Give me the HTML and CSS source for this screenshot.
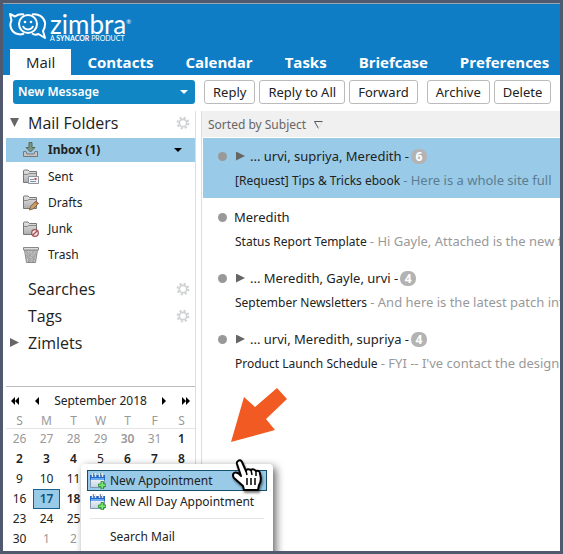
FILE: index.html
```html
<!DOCTYPE html>
<html lang="en">
<head>
    <meta charset="UTF-8">
    <title>Zimbra: Inbox (1)</title>
    <meta name="viewport" content="width=device-width, initial-scale=1">
    <link rel="stylesheet" href="styles.css">
</head>
<body>
<svg class="defs" width="0" height="0" aria-hidden="true">
    <defs>
        <linearGradient id="folderFill" x1="0" y1="0" x2="0" y2="1">
            <stop offset="0" stop-color="#e4e4e4"/>
            <stop offset="1" stop-color="#adadad"/>
        </linearGradient>
        <linearGradient id="calFill" x1="0" y1="0" x2="0" y2="1">
            <stop offset="0" stop-color="#ffffff"/>
            <stop offset="1" stop-color="#c4d3e2"/>
        </linearGradient>
    </defs>
    <symbol id="gear" viewBox="0 0 14 14">
        <circle cx="7" cy="7" r="5.4" fill="none" stroke="#cfd1d3" stroke-width="2" stroke-dasharray="2.1 2.14"/>
        <circle cx="7" cy="7" r="3.7" fill="none" stroke="#cfd1d3" stroke-width="1.7"/>
    </symbol>
    <symbol id="folder" viewBox="0 0 16 16">
        <path d="M.5 13.500V2Q.5 1 1.500 1H5L6.500 2.500H13.500V13.500Z" fill="url(#folderFill)" stroke="#777"/>
        <path d="M1 5.500H4.500L6 4.500H13.500" fill="none" stroke="#8a8a8a"/>
    </symbol>
    <symbol id="appt" viewBox="0 0 16 16">
        <path d="M.5 2.500H14.500V14.500H.5Z" fill="url(#calFill)" stroke="#7c96b4"/>
        <path d="M0 2H15V7H0Z" fill="#2467c8"/>
        <path d="M1 5H14V7H1Z" fill="#69a9ef"/>
        <path d="M2.500 0V4M5.500 0V4M9.500 0V4M12.500 0V4" stroke="#e2e5e8" stroke-width="1.500"/>
        <path d="M3.500 0V3M10.500 0V3" stroke="#68717d" stroke-width=".8"/>
        <path d="M11 8.500H13.500V11H16V13.500H13.500V16H11V13.500H8.500V11H11Z" fill="#7be56c" stroke="#188a20" stroke-width=".8"/>
    </symbol>
</svg>

<div class="app">
    <header class="banner">
        <a class="logo" href="#" aria-label="Zimbra">
            <svg class="logo-mark" viewBox="0 0 38 27" fill="none" stroke="#fff" stroke-width="2" stroke-linejoin="round">
                <circle cx="19" cy="11" r="9"/>
                <path d="M15 1.500Q10 .5 6 3.500L1 1L2.500 7.500C-.5 13 3 20 9 21Q12 22 15 20.500"/>
                <path d="M23 1.500C29 0 35 4 36 9.500Q36.500 14 34 18L36 25L29.500 21Q26 22.500 23 20.500"/>
                <path d="M14 13C15.500 17.500 22.500 17.500 24 13"/>
                <circle cx="16" cy="9" r="1.300" fill="#fff" stroke="none"/>
                <circle cx="22" cy="9" r="1.300" fill="#fff" stroke="none"/>
            </svg>
            <span class="logo-text">
                <span class="logo-name">zimbra<sup>®</sup></span>
                <span class="logo-sub">A <b>SYNACOR</b> PRODUCT</span>
            </span>
        </a>
        <nav class="tabs">
            <a class="tab active" href="#">Mail</a>
            <a class="tab" href="#">Contacts</a>
            <a class="tab" href="#">Calendar</a>
            <a class="tab" href="#">Tasks</a>
            <a class="tab" href="#">Briefcase</a>
            <a class="tab" href="#">Preferences</a>
        </nav>
    </header>

    <div class="toolbar">
        <button class="btn-new" type="button">New Message <i class="caret"></i></button>
        <div class="btn-group">
            <button class="btn" type="button">Reply</button>
            <button class="btn" type="button">Reply to All</button>
            <button class="btn" type="button">Forward</button>
        </div>
        <div class="btn-group">
            <button class="btn" type="button">Archive</button>
            <button class="btn" type="button">Delete</button>
        </div>
    </div>

    <div class="content">
        <aside class="sidebar">
            <div class="tree">
                <div class="tree-head"><i class="arrow down"></i><span>Mail Folders</span><svg class="gear"><use href="#gear"/></svg></div>
                <ul class="folders">
                    <li><a class="folder selected" href="#">
                        <svg viewBox="0 0 16 16"><path d="M.5 9.500H3L4 12H11L12 9.500H14.500V14.500H.5Z" fill="#c4c4c4" stroke="#767676"/><path d="M6 .5H9V5.500H12L7.500 10L3 5.500H6Z" fill="#7e9683" stroke="#526b59"/></svg>
                        <span>Inbox (1)</span><i class="caret"></i></a></li>
                    <li><a class="folder" href="#">
                        <svg viewBox="0 0 16 16"><use href="#folder"/><path d="M5.500 7.500H15.500V14.500H5.500Z" fill="#f5f5f5" stroke="#8d949c"/><path d="M12.500 9V11" stroke="#b94a4a" stroke-width="2"/><path d="M7 10.500H11M7 12.500H13" stroke="#7e96ad"/></svg>
                        <span>Sent</span></a></li>
                    <li><a class="folder" href="#">
                        <svg viewBox="0 0 16 16"><use href="#folder"/><path d="M6.500 15L7.500 11.500L13 6L15.500 8.500L10 14Z" fill="#c9a263" stroke="#6b5431" stroke-width=".8"/><path d="M12.500 6.500L15 9" stroke="#bd6552" stroke-width="2"/></svg>
                        <span>Drafts</span></a></li>
                    <li><a class="folder" href="#">
                        <svg viewBox="0 0 16 16"><use href="#folder"/><circle cx="12" cy="12" r="3.300" fill="#eee" stroke="#a84f55" stroke-width="1.300"/><path d="M9.700 14.300L14.300 9.700" stroke="#a84f55" stroke-width="1.300"/></svg>
                        <span>Junk</span></a></li>
                    <li><a class="folder" href="#">
                        <svg viewBox="0 0 16 16"><path d="M1.500 3H14.500L12.500 15.500H3.500Z" fill="#c2c2c2" stroke="#8a8a8a"/><path d="M4 5L6 15M7 4V15M10 4V15M13 5L10 15M2 7L10 15M3 4L12 13M13 7L5 15M12 4L3 11" stroke="#989898" stroke-width=".7"/><path d="M.5 .5H15.500V3H.5Z" fill="#ddd" stroke="#888"/></svg>
                        <span>Trash</span></a></li>
                </ul>
                <div class="tree-head"><i class="arrow"></i><span>Searches</span><svg class="gear"><use href="#gear"/></svg></div>
                <div class="tree-head"><i class="arrow"></i><span>Tags</span><svg class="gear"><use href="#gear"/></svg></div>
                <div class="tree-head"><i class="arrow right"></i><span>Zimlets</span></div>
            </div>

            <div class="minical">
                <div class="cal-nav">
                    <button type="button" aria-label="Previous year"><svg viewBox="0 0 9 8"><path d="M4 0V8L0 4ZM8 0V8L4 4Z"/></svg></button>
                    <button type="button" aria-label="Previous month"><svg viewBox="0 0 9 8"><path d="M6 0V8L2 4Z"/></svg></button>
                    <span class="cal-title">September 2018</span>
                    <button type="button" aria-label="Next month"><svg viewBox="0 0 9 8"><path d="M3 0V8L7 4Z"/></svg></button>
                    <button type="button" aria-label="Next year"><svg viewBox="0 0 9 8"><path d="M1 0V8L5 4ZM5 0V8L9 4Z"/></svg></button>
                </div>
                <table>
                    <thead>
                    <tr><th>S</th><th>M</th><th>T</th><th>W</th><th>T</th><th>F</th><th>S</th></tr>
                    </thead>
                    <tbody>
                    <tr><td class="off">26</td><td class="off">27</td><td class="off">28</td><td class="off">29</td><td class="off busy">30</td><td class="off">31</td><td class="busy">1</td></tr>
                    <tr><td class="busy">2</td><td class="busy">3</td><td class="busy">4</td><td>5</td><td class="busy">6</td><td class="busy">7</td><td class="busy">8</td></tr>
                    <tr><td>9</td><td>10</td><td>11</td><td>12</td><td>13</td><td>14</td><td>15</td></tr>
                    <tr><td>16</td><td class="today">17</td><td class="busy">18</td><td>19</td><td>20</td><td>21</td><td>22</td></tr>
                    <tr><td>23</td><td>24</td><td>25</td><td>26</td><td>27</td><td>28</td><td>29</td></tr>
                    <tr><td>30</td><td class="off">1</td><td class="off">2</td><td class="off">3</td><td class="off">4</td><td class="off">5</td><td class="off">6</td></tr>
                    </tbody>
                </table>

                <div class="menu">
                    <button class="menu-item hover" type="button"><svg><use href="#appt"/></svg>New Appointment</button>
                    <button class="menu-item" type="button"><svg><use href="#appt"/></svg>New All Day Appointment</button>
                    <hr>
                    <button class="menu-item" type="button"><svg></svg>Search Mail</button>
                </div>
                <svg class="pointer-arrow" viewBox="0 0 58 56"><path d="M1 55L14 10L25 20L47 1L57 12L36 32L45 43Z" fill="#f15a22"/></svg>
                <svg class="cursor" viewBox="0 0 32 34">
                    <path d="M7 2Q9.500 0 11 3L15 12Q16 9 20 11Q22 9 25 12Q29 11 29 15Q31 22 28 26L27 31H13L12 27L3 19Q1 16 3 14Q6 12 10 17L6 5Q5.500 3 7 2Z" fill="#fff" stroke="#000" stroke-width="2" stroke-linejoin="round"/>
                    <path d="M15 12L16 16M20 11L21 16M25 12V17" stroke="#000" stroke-width="1.500"/>
                    <path d="M16 19V26M20 19V26M24 19V26" stroke="#000" stroke-width="1.500"/>
                </svg>
            </div>
        </aside>

        <main class="mail">
            <div class="sort">Sorted by Subject <svg viewBox="0 0 9 8"><path d="M8.500 .5H.5L4.500 7.500" fill="none" stroke="#555"/><path d="M4.500 7.500L8 1" stroke="#ddd"/></svg></div>
            <ul class="messages">
                <li class="message selected">
                    <div class="from"><i class="dot"></i><i class="expand"></i><span>... urvi, supriya, Meredith -</span><b class="count">6</b></div>
                    <div class="subject">[Request] Tips &amp; Tricks ebook <span>- Here is a whole site full</span></div>
                </li>
                <li class="message">
                    <div class="from"><i class="dot"></i><span>Meredith</span></div>
                    <div class="subject">Status Report Template <span>- Hi Gayle, Attached is the new f</span></div>
                </li>
                <li class="message">
                    <div class="from"><i class="dot"></i><i class="expand"></i><span>... Meredith, Gayle, urvi -</span><b class="count">4</b></div>
                    <div class="subject">September Newsletters <span>- And here is the latest patch inf</span></div>
                </li>
                <li class="message">
                    <div class="from"><i class="dot"></i><i class="expand"></i><span>... urvi, Meredith, supriya -</span><b class="count">4</b></div>
                    <div class="subject">Product Launch Schedule <span>- FYI -- I've contact the design</span></div>
                </li>
            </ul>
        </main>
    </div>
</div>
</body>
</html>
```
FILE: styles.css
```css
/*reset*/
body,ul,li,button,td,th{
    padding: 0;
    margin: 0;
}
ul{
    list-style: none;
}
a{
    color: inherit;
    text-decoration: none;
}
button{
    font: inherit;
    color: inherit;
    border: 0;
    background: none;
}
body{
    font-family: "Noto Sans","Open Sans",sans-serif;
    font-size: 12px;
    line-height: 20px;
    color: #222;
}
.defs{
    position: absolute;
}

/*frame*/
.app{
    display: flex;
    flex-direction: column;
    height: 100vh;
    box-sizing: border-box;
    border: 3px solid #51596e;
    overflow: hidden;
    background: #fff;
}

/*banner*/
.banner{
    display: flex;
    flex-direction: column;
    justify-content: space-between;
    flex: none;
    height: 72px;
    box-sizing: border-box;
    padding: 9px 7px 0 6px;
    border-top: 1px solid #9aa5b1;
    background: #0f7dc5;
    color: #fff;
}
.logo{
    display: flex;
    gap: 3px;
}
.logo-mark{
    width: 38px;
    height: 27px;
}
.logo-text{
    display: flex;
    flex-direction: column;
}
.logo-name{
    font-family: Lato,sans-serif;
    font-size: 26px;
    line-height: 22px;
    height: 22px;
}
.logo-name sup{
    font-size: 6px;
    line-height: 6px;
    vertical-align: 10px;
}
.logo-sub{
    font-family: Lato,sans-serif;
    font-size: 7px;
    line-height: 6px;
}
.tabs{
    display: flex;
    padding-left: 1px;
}
.tab{
    padding: 0 16px;
    font-family: "Open Sans",sans-serif;
    font-size: 15px;
    font-weight: bold;
    line-height: 26px;
}
.tab.active{
    background: #fff;
    color: #222;
    font-weight: normal;
}

/*toolbar*/
.toolbar{
    display: flex;
    flex: none;
    gap: 9px;
    padding: 5px 4px 7px 10px;
}
.btn-new{
    display: flex;
    justify-content: space-between;
    align-items: center;
    width: 182px;
    height: 24px;
    padding: 0 7px 0 5px;
    border-radius: 3px;
    background: #1086c5;
    color: #fff;
    font-weight: 600;
}
.caret{
    border: 4px solid transparent;
    border-top-color: currentColor;
    border-bottom: 0;
}
.btn-group{
    display: flex;
    gap: 4px;
}
.btn{
    height: 24px;
    padding: 0 8px;
    border: 1px solid #bbb;
    border-radius: 3px;
    background: #fff;
    font-size: 13px;
    white-space: nowrap;
}

/*sidebar*/
.content{
    display: flex;
    flex: 1;
    min-height: 0;
    padding-left: 3px;
}
.sidebar{
    display: flex;
    flex-direction: column;
    flex: none;
    width: 189px;
    border-right: 1px solid #ddd;
}
.tree{
    flex: 1;
}
.tree-head{
    display: flex;
    align-items: center;
    height: 23px;
    margin-bottom: 4px;
    padding: 0 5px 0 4px;
    font-family: "Open Sans",sans-serif;
    font-size: 16px;
}
.tree-head span{
    flex: 1;
}
.tree-head .gear{
    width: 14px;
    height: 14px;
}
.arrow{
    width: 18px;
    height: 9px;
    flex: none;
}
.arrow::before{
    content: "";
    display: block;
    width: 9px;
    height: 9px;
}
.arrow.down::before{
    background: #666;
    clip-path: polygon(0 0,100% 0,50% 100%);
}
.arrow.right::before{
    background: #666;
    clip-path: polygon(0 0,100% 50%,0 100%);
}
.folders{
    padding-bottom: 9px;
}
.folder{
    display: flex;
    align-items: center;
    gap: 9px;
    height: 26px;
    padding: 0 13px 0 17px;
}
.folder svg{
    width: 16px;
    height: 16px;
}
.folder span{
    flex: 1;
}
.folder.selected{
    height: 24px;
    margin-bottom: 2px;
    background: #99cae7;
    font-weight: bold;
}
.folder .caret{
    color: #000;
}

/*mini calendar*/
.minical{
    position: relative;
    flex: none;
    padding-bottom: 2px;
    border-top: 1px solid #bbb;
}
.cal-nav{
    display: flex;
    justify-content: space-between;
    align-items: center;
    height: 26px;
    padding: 2px 5px 0;
    box-sizing: border-box;
}
.cal-nav button{
    display: flex;
}
.cal-nav svg{
    width: 9px;
    height: 8px;
}
.minical table{
    width: 100%;
    table-layout: fixed;
    border-collapse: separate;
    border-spacing: 0;
}
.minical th{
    height: 15px;
    line-height: 15px;
    border-bottom: 1px solid #e4e4e4;
    color: #999;
    font-weight: normal;
}
.minical td{
    height: 20px;
    line-height: 18px;
    text-align: center;
}
.minical .busy{
    font-weight: 600;
}
.minical .off{
    color: #999;
}
.minical .today{
    background: #99cae7;
    box-shadow: inset 0 0 0 1px #15628f;
    color: #0b5580;
    font-weight: 600;
}

/*context menu*/
.menu{
    position: absolute;
    top: 77px;
    left: 75px;
    width: 192px;
    height: 100px;
    box-sizing: border-box;
    padding: 6px;
    border-radius: 4px;
    background: #fff;
    box-shadow: 3px 3px 8px rgba(0,0,0,.6);
}
.menu-item{
    display: flex;
    align-items: center;
    gap: 4px;
    width: 100%;
    height: 21px;
    padding: 0 2px;
    border: 1px solid transparent;
    white-space: nowrap;
}
.menu-item svg{
    width: 16px;
    height: 16px;
    flex: none;
}
.menu-item.hover{
    background: #99cae7;
    border-color: #174f6d;
}
.menu hr{
    margin: 6px 3px 7px;
    border: 0;
    border-top: 1px solid #e4e4e4;
}
.pointer-arrow{
    position: absolute;
    top: 0;
    left: 224px;
    width: 58px;
    height: 56px;
}
.cursor{
    position: absolute;
    top: 72px;
    left: 225px;
    width: 32px;
    height: 34px;
    filter: drop-shadow(1px 2px 1px rgba(0,0,0,.5));
}

/*message list*/
.mail{
    flex: 1;
    min-width: 0;
    margin-left: 5px;
    border-left: 1px solid #ddd;
}
.sort{
    height: 26px;
    padding-left: 6px;
    background: #f0f0f0;
    color: #666;
    line-height: 27px;
}
.sort svg{
    width: 9px;
    height: 8px;
    margin-left: 5px;
}
.messages{
    padding: 1px 0 0 1px;
}
.message{
    height: 60px;
    margin-bottom: 1px;
    padding: 6px 0 0 15px;
    box-sizing: border-box;
    white-space: nowrap;
    overflow: hidden;
}
.message.selected{
    background: #99cae7;
}
.from{
    display: flex;
    align-items: center;
    height: 24px;
    font-size: 13px;
}
.dot{
    width: 9px;
    height: 9px;
    margin-right: 7px;
    border-radius: 50%;
    background: #999;
}
.expand{
    width: 9px;
    height: 9px;
    margin: 0 5px 0 2px;
    background: #666;
    clip-path: polygon(0 0,100% 50%,0 100%);
}
.count{
    width: 16px;
    height: 15px;
    margin-left: 2px;
    border-radius: 7px;
    background: #b3b3b3;
    color: #fff;
    font-size: 12px;
    line-height: 15px;
    text-align: center;
}
.subject{
    height: 24px;
    padding-left: 17px;
    line-height: 24px;
}
.subject span{
    color: #999;
    font-size: 13px;
}
.selected .subject span{
    color: #5b7d91;
}
```
